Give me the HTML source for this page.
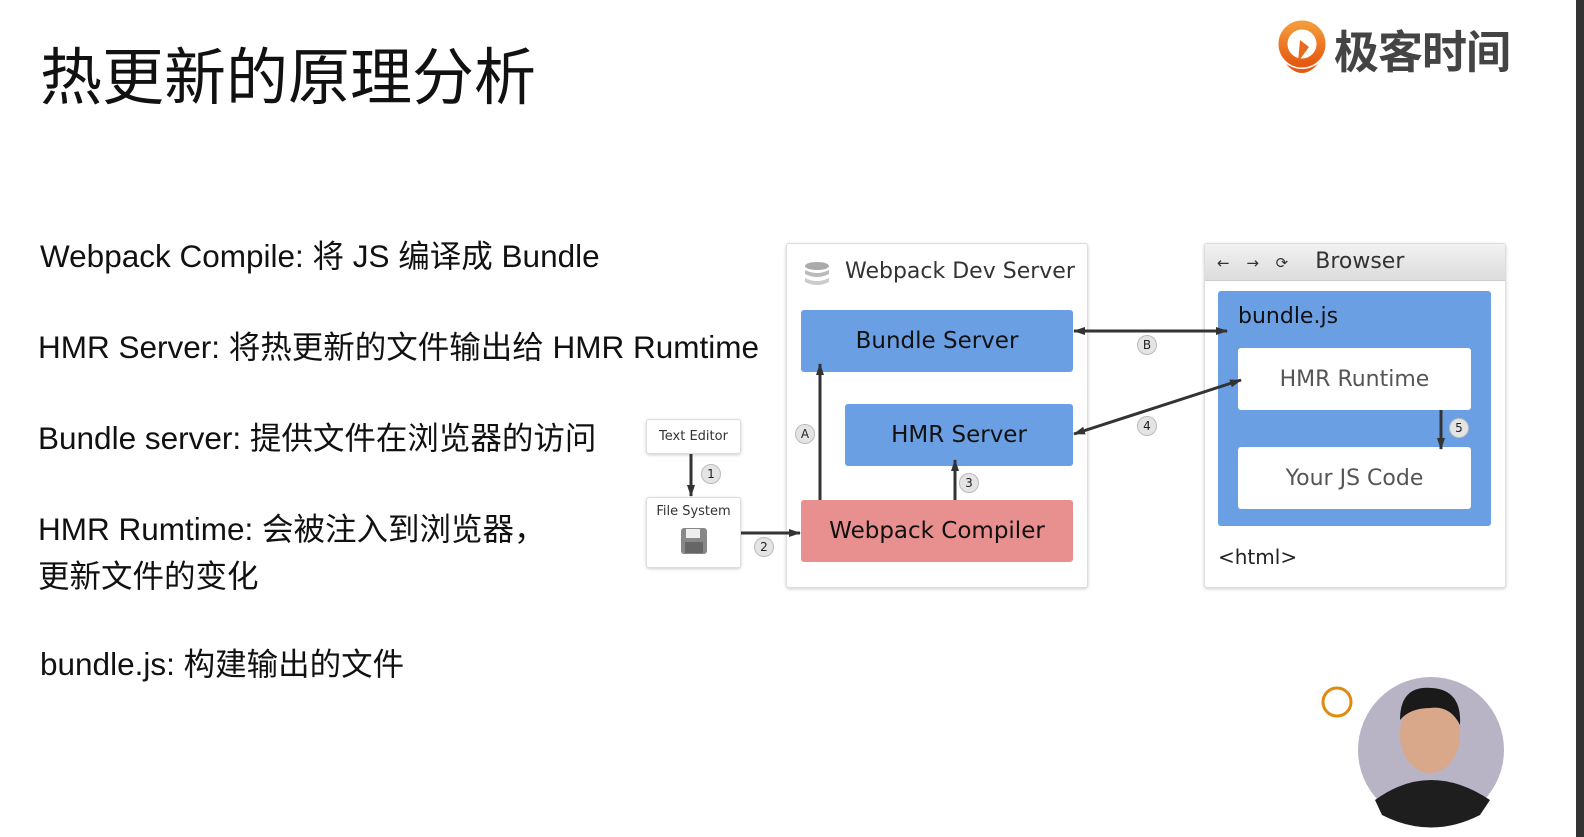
<!DOCTYPE html>
<html><head><meta charset="utf-8"><style>
*{margin:0;padding:0;box-sizing:border-box}
body{width:1584px;height:837px;background:#fff;position:relative;overflow:hidden;font-family:"Liberation Sans","Noto Sans CJK SC",sans-serif;color:#111}
.a{position:absolute}
.t{font-size:31.5px;white-space:nowrap;line-height:34px}
.box{position:absolute;border:1px solid #ddd;background:#fff;border-radius:3px;box-shadow:0 1px 3px rgba(0,0,0,.2)}
.bl{position:absolute;background:#6a9fe3;border-radius:3px;display:flex;align-items:center;justify-content:center;font-size:23px;color:#111;font-family:"DejaVu Sans",sans-serif}
.wh{position:absolute;background:#fff;border-radius:3px;display:flex;align-items:center;justify-content:center;font-size:22px;color:#555;font-family:"DejaVu Sans",sans-serif}
.c{position:absolute;width:20px;height:20px;border-radius:50%;background:#e4e4e4;border:1px solid #bbb;font-size:12px;display:flex;align-items:center;justify-content:center;font-family:"DejaVu Sans",sans-serif;color:#222}
</style></head><body>
<div class="a" style="left:40px;top:36px;font-size:62px;line-height:72px;font-family:'Noto Sans CJK SC',sans-serif">热更新的原理分析</div>
<svg class="a" style="left:1278px;top:20px" width="50" height="58" viewBox="0 0 50 58"><defs><linearGradient id="g" x1="0" y1="0" x2="0" y2="1"><stop offset="0" stop-color="#f39a3a"/><stop offset="1" stop-color="#e55a12"/></linearGradient></defs><circle cx="24" cy="24" r="19" fill="none" stroke="url(#g)" stroke-width="9"/><path d="M20 42 L22 20 L31 27 Z" fill="#e86a1c"/><path d="M8 44 Q24 62 40 44 Q24 54 8 44Z" fill="#e55a12"/></svg>
<div class="a" style="left:1334px;top:22px;font-size:45px;line-height:54px;color:#444;font-weight:bold;font-family:'Noto Sans CJK SC',sans-serif;letter-spacing:-1px">极客时间</div>
<div class="a" style="left:1576px;top:0;width:8px;height:837px;background:#333"></div>

<div class="a t" style="left:40px;top:239px">Webpack Compile: 将 JS 编译成 Bundle</div>
<div class="a t" style="left:38px;top:330px">HMR Server: 将热更新的文件输出给 HMR Rumtime</div>
<div class="a t" style="left:38px;top:421px">Bundle server: 提供文件在浏览器的访问</div>
<div class="a t" style="left:38px;top:512px">HMR Rumtime: 会被注入到浏览器，</div>
<div class="a t" style="left:38px;top:559px">更新文件的变化</div>
<div class="a t" style="left:40px;top:647px">bundle.js: 构建输出的文件</div>

<div class="box" style="left:786px;top:243px;width:302px;height:345px"></div>
<svg class="a" style="left:803px;top:260px" width="28" height="28"><ellipse cx="14" cy="6" rx="12" ry="4" fill="#aaa"/><path d="M2 10 Q14 16 26 10 V14 Q14 20 2 14Z" fill="#bbb"/><path d="M2 18 Q14 24 26 18 V22 Q14 28 2 22Z" fill="#ccc"/></svg>
<div class="a" style="left:845px;top:259px;font-size:22px;color:#333;font-family:'DejaVu Sans',sans-serif">Webpack Dev Server</div>
<div class="bl" style="left:801px;top:310px;width:272px;height:62px">Bundle Server</div>
<div class="bl" style="left:845px;top:404px;width:228px;height:62px">HMR Server</div>
<div class="bl" style="left:801px;top:500px;width:272px;height:62px;background:#e88f8f">Webpack Compiler</div>

<div class="box" style="left:646px;top:419px;width:95px;height:35px;font-size:13px;display:flex;align-items:center;justify-content:center;font-family:'DejaVu Sans',sans-serif;color:#333">Text Editor</div>
<div class="box" style="left:646px;top:497px;width:95px;height:71px;font-size:13px;text-align:center;padding-top:6px;font-family:'DejaVu Sans',sans-serif;color:#333">File System
<svg style="display:block;margin:8px auto 0" width="28" height="28"><rect x="1" y="1" width="26" height="26" rx="3" fill="#888"/><rect x="6" y="2" width="14" height="9" fill="#eee"/><rect x="5" y="15" width="18" height="11" fill="#666"/></svg></div>

<div class="box" style="left:1204px;top:243px;width:302px;height:345px;overflow:hidden">
<div style="height:37px;background:linear-gradient(#f2f2f2,#dcdcdc);border-bottom:1px solid #ccc;font-family:'DejaVu Sans',sans-serif;font-size:22px;color:#333;line-height:36px;padding-left:12px"><span style="font-size:15px;letter-spacing:6px">← → ⟳</span>&nbsp;&nbsp;&nbsp;Browser</div>
</div>
<div class="a" style="left:1218px;top:291px;width:273px;height:235px;background:#6a9fe3;border-radius:3px"></div>
<div class="a" style="left:1238px;top:304px;font-size:22px;font-family:'DejaVu Sans',sans-serif">bundle.js</div>
<div class="wh" style="left:1238px;top:348px;width:233px;height:62px">HMR Runtime</div>
<div class="wh" style="left:1238px;top:447px;width:233px;height:62px">Your JS Code</div>
<div class="a" style="left:1218px;top:545px;font-size:20px;font-family:'DejaVu Sans',sans-serif;color:#222">&lt;html&gt;</div>

<svg class="a" style="left:0;top:0" width="1584" height="837">
<defs><marker id="m" markerUnits="userSpaceOnUse" markerWidth="12" markerHeight="10" refX="11" refY="5" orient="auto-start-reverse"><path d="M0 1 L12 5 L0 9Z" fill="#333"/></marker></defs>
<g stroke="#333" stroke-width="3" fill="none">
<line x1="820" y1="500" x2="820" y2="364" marker-end="url(#m)"/>
<line x1="955" y1="500" x2="955" y2="460" marker-end="url(#m)"/>
<line x1="691" y1="454" x2="691" y2="496" marker-end="url(#m)"/>
<line x1="741" y1="533" x2="800" y2="533" marker-end="url(#m)"/>
<line x1="1074" y1="331" x2="1227" y2="331" marker-start="url(#m)" marker-end="url(#m)"/>
<line x1="1074" y1="434" x2="1241" y2="380" marker-start="url(#m)" marker-end="url(#m)"/>
<line x1="1441" y1="410" x2="1441" y2="449" marker-end="url(#m)"/>
</g>
<circle cx="1337" cy="702" r="14" fill="none" stroke="#e08a10" stroke-width="3"/>
<circle cx="1431" cy="750" r="73" fill="#b9b3c6"/>
<path d="M1375 800 Q1430 760 1490 800 L1480 815 Q1431 840 1382 815Z" fill="#1e1e1e"/>
<ellipse cx="1430" cy="735" rx="30" ry="38" fill="#d9a88a"/>
<path d="M1400 720 Q1400 685 1432 688 Q1462 690 1460 725 Q1450 705 1430 708 Q1410 708 1400 720Z" fill="#1a1a1a"/>
</svg>
<div class="c" style="left:795px;top:424px">A</div>
<div class="c" style="left:1137px;top:335px">B</div>
<div class="c" style="left:1137px;top:416px">4</div>
<div class="c" style="left:701px;top:464px">1</div>
<div class="c" style="left:754px;top:537px">2</div>
<div class="c" style="left:959px;top:473px">3</div>
<div class="c" style="left:1449px;top:418px">5</div>
</body></html>
